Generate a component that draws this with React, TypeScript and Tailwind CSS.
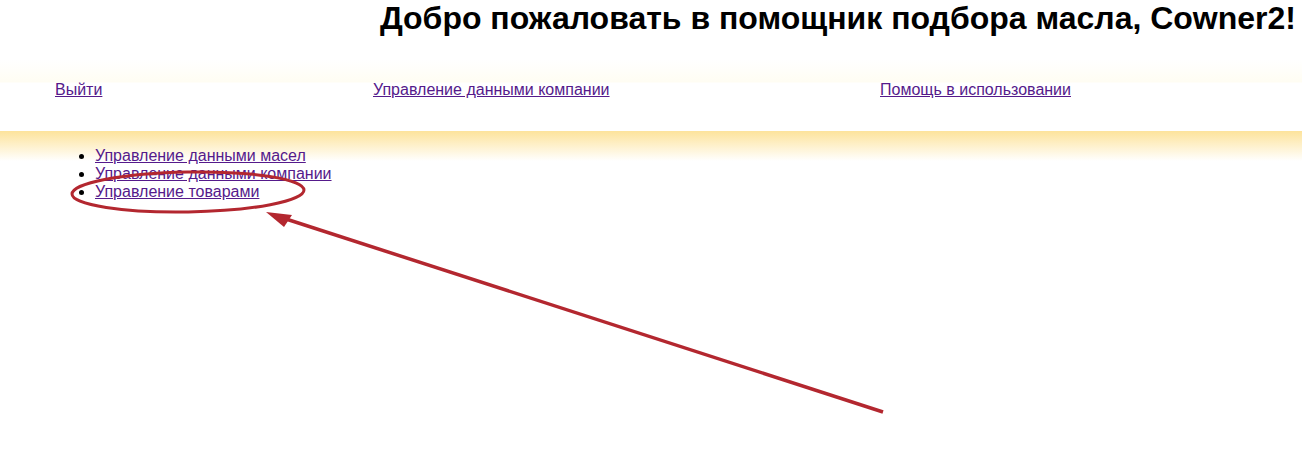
import React from "react";

export default function App() {
  const font = { fontFamily: '"Liberation Sans", Arial, sans-serif' };
  return (
    <div className="relative w-[1302px] h-[472px] bg-white overflow-hidden" style={font}>
      <h1 className="m-0 h-[60px] text-right pr-[6px] text-[32px] leading-[36px] font-bold text-black">
        Добро пожаловать в помощник подбора масла, Cowner2!
      </h1>
      <div className="h-[71px] bg-[linear-gradient(to_bottom,#ffffff_0px,#fffdf3_22px,#ffffff_23px)]">
        <div className="grid grid-cols-[318px_507px_auto] pl-[55px] pt-[20px] text-[16px] leading-[20px]">
          <a href="#" className="text-[#551a8b] underline">Выйти</a>
          <a href="#" className="text-[#551a8b] underline">Управление данными компании</a>
          <a href="#" className="text-[#551a8b] underline">Помощь в использовании</a>
        </div>
      </div>
      <div className="h-[341px] pt-[16px] bg-[linear-gradient(to_bottom,#fde39b_0px,#ffffff_30px)]">
        <ul className="m-0 ml-[55px] pl-[40px] list-disc text-[16px] leading-[18px]">
          <li><a href="#" className="text-[#551a8b] underline">Управление данными масел</a></li>
          <li><a href="#" className="text-[#551a8b] underline">Управление данными компании</a></li>
          <li><a href="#" className="text-[#551a8b] underline">Управление товарами</a></li>
        </ul>
      </div>
      <svg className="absolute left-0 top-0 pointer-events-none" width="1302" height="472" viewBox="0 0 1302 472">
        <ellipse cx="188" cy="192" rx="116" ry="20" fill="none" stroke="#b3272f" strokeWidth="3" transform="rotate(-1 188 192)" />
        <line x1="883" y1="412" x2="286" y2="219" stroke="#b3272f" strokeWidth="3.5" />
        <polygon points="266,212 292,215 284,227" fill="#b3272f" />
      </svg>
    </div>
  );
}
